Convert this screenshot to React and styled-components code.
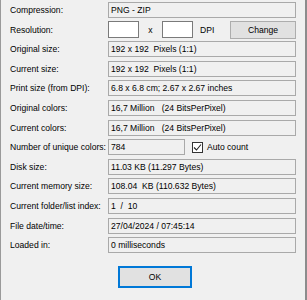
import React from "react"
import styled, { createGlobalStyle } from "styled-components"

const Global = createGlobalStyle`
  html, body {
    margin: 0;
    background: #f0f0f0;
  }
  body {
    font-family: "Liberation Sans", Arial, sans-serif;
    font-size: 8.6px;
    color: #000;
  }
`

const Dialog = styled.div`
  box-sizing: border-box;
  width: 307px;
  height: 300px;
  background: #f0f0f0;
  border-left: 1px solid #9a9a9a;
  border-right: 2px solid #8c8c8c;
  padding: 2px 0 0 9px;
  display: flex;
  flex-direction: column;
`

const Grid = styled.div`
  display: grid;
  grid-template-columns: 98px 188px;
  grid-auto-rows: 16px;
  row-gap: 3.6px;
  align-items: center;
`

const Label = styled.div`
  white-space: nowrap;
  line-height: 16px;
`

const Field = styled.div`
  box-sizing: border-box;
  height: 16px;
  width: ${p => p.$w || "188px"};
  border: 1px solid #a9a9a9;
  background: #f0f0f0;
  padding: 0 2px;
  line-height: 14px;
  white-space: pre;
  overflow: hidden;
`

const Line = styled.div`
  display: flex;
  align-items: center;
  height: 16px;
`

const Input = styled.div`
  box-sizing: border-box;
  width: 31px;
  height: 17px;
  background: #fff;
  border: 1px solid #7a7a7a;
`

const Times = styled.span`
  width: 23px;
  text-align: center;
`

const Unit = styled.span`
  padding-left: 7px;
`

const Button = styled.div`
  box-sizing: border-box;
  display: flex;
  align-items: center;
  justify-content: center;
  background: #e1e1e1;
  border: ${p => (p.$default ? "2px solid #0078d7" : "1px solid #adadad")};
  width: ${p => p.$w};
  height: ${p => p.$h};
  margin-left: ${p => p.$ml || "0"};
`

const Check = styled.div`
  box-sizing: border-box;
  width: 11px;
  height: 11px;
  margin-left: 7px;
  margin-right: 4px;
  background: #fff;
  border: 1px solid #333;
  display: flex;
  align-items: center;
  justify-content: center;
`

const Footer = styled.div`
  display: flex;
  padding: 13px 0 0 108px;
`

const rows = [
  ["Original size:", "192 x 192  Pixels (1:1)"],
  ["Current size:", "192 x 192  Pixels (1:1)"],
  ["Print size (from DPI):", "6.8 x 6.8 cm; 2.67 x 2.67 inches"],
  ["Original colors:", "16,7 Million   (24 BitsPerPixel)"],
  ["Current colors:", "16,7 Million   (24 BitsPerPixel)"],
]

const rowsAfter = [
  ["Disk size:", "11.03 KB (11.297 Bytes)"],
  ["Current memory size:", "108.04  KB (110.632 Bytes)"],
  ["Current folder/list index:", "1  /  10"],
  ["File date/time:", "27/04/2024 / 07:45:14"],
  ["Loaded in:", "0 milliseconds"],
]

export default function App() {
  return (
    <Dialog>
      <Global />
      <Grid>
        <Label>Compression:</Label>
        <Field>PNG - ZIP</Field>

        <Label>Resolution:</Label>
        <Line>
          <Input />
          <Times>x</Times>
          <Input />
          <Unit>DPI</Unit>
          <Button $w="66px" $h="18px" $ml="auto">Change</Button>
        </Line>

        {rows.map(([k, v]) => (
          <React.Fragment key={k}>
            <Label>{k}</Label>
            <Field>{v}</Field>
          </React.Fragment>
        ))}

        <Label>Number of unique colors:</Label>
        <Line>
          <Field $w="77px">784</Field>
          <Check>
            <svg width="9" height="9" viewBox="0 0 9 9">
              <path d="M1 4.5 L3.5 7 L8 1.5" fill="none" stroke="#222" strokeWidth="1.1" />
            </svg>
          </Check>
          <span>Auto count</span>
        </Line>

        {rowsAfter.map(([k, v]) => (
          <React.Fragment key={k}>
            <Label>{k}</Label>
            <Field>{v}</Field>
          </React.Fragment>
        ))}
      </Grid>
      <Footer>
        <Button $default $w="74px" $h="22px">OK</Button>
      </Footer>
    </Dialog>
  )
}
